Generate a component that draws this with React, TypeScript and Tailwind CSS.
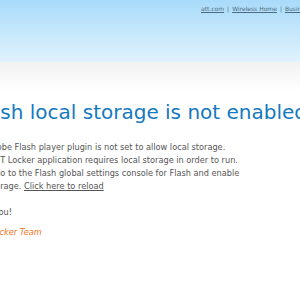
export default function App() {
  return (
    <div className="w-[300px] h-[300px] overflow-hidden bg-white font-['DejaVu_Sans',Verdana,sans-serif]">
      <div className="w-[420px] ml-[-30px]">
        {/* header band */}
        <div className="h-[62px] bg-gradient-to-b from-[#a8dbfa] to-[#e0f3fd]">
          <div className="pl-[231px] pt-[5px] flex gap-[3px] text-[6px] leading-[8px] text-[#4d6a80]">
            <a className="underline">att.com</a>
            <span>|</span>
            <a className="underline">Wireless Home</a>
            <span>|</span>
            <a className="underline">Business</a>
          </div>
        </div>
        <div className="h-[30px] bg-gradient-to-b from-[#f2f2f2] to-white" />

        <h1 className="mt-[8px] ml-[1px] text-[20px] leading-[24px] text-[#1479bf]">
          Flash local storage is not enabled
        </h1>

        <div className="ml-[-4px] text-[8.2px] leading-[13px] text-[#555555]">
          <p className="mt-[17px]">
            Your Adobe Flash player plugin is not set to allow local storage.
            <br />
            The AT&amp;T Locker application requires local storage in order to run.
            <br />
            Please go to the Flash global settings console for Flash and enable
            <br />
            local storage. <a className="underline">Click here to reload</a>
          </p>
          <p className="mt-[13px]">Thank you!</p>
          <p className="mt-[7px] italic text-[#f47320]">AT&amp;T Locker Team</p>
        </div>
      </div>
    </div>
  )
}
